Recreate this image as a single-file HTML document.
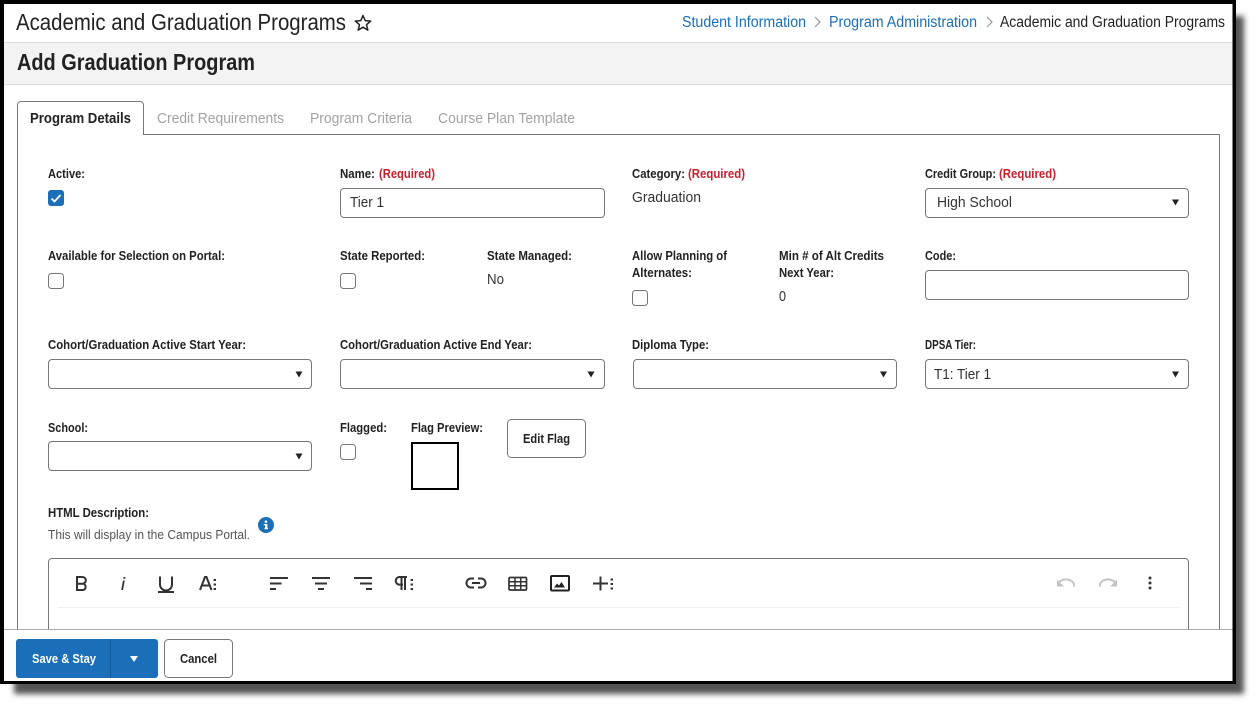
<!DOCTYPE html>
<html lang="en"><head><meta charset="utf-8"><title>Add Graduation Program</title>
<style>
html,body{margin:0;padding:0;background:#fff;width:1260px;height:709px;overflow:hidden}
svg{display:block}
text{font-family:"Liberation Sans",sans-serif;fill:#2b2b2b}
.l{font-size:13px;font-weight:bold;fill:#222}
.r{font-size:13px;font-weight:bold;fill:#c8202f}
.v{font-size:15px;fill:#333}
.f{fill:#fff;stroke:#777;stroke-width:1}
.i{fill:none;stroke:#333;stroke-width:2}
.d{fill:none;stroke:#333;stroke-width:2.400}
</style></head><body>
<svg width="1260" height="709" viewBox="0 0 1260 709" xmlns="http://www.w3.org/2000/svg">
<defs><filter id="b" x="-5%" y="-5%" width="110%" height="110%"><feGaussianBlur stdDeviation="3"/></filter></defs>
<rect x="14" y="16" width="1230" height="678" fill="#555" filter="url(#b)"/>
<rect x="0" y="0" width="1236" height="684" fill="#000"/>
<rect x="4" y="4" width="1228.500" height="677" fill="#fff"/>

<!-- header -->
<text x="16" y="30" font-size="23" textLength="330" lengthAdjust="spacingAndGlyphs" style="fill:#222">Academic and Graduation Programs</text>
<path d="M363 15.500l2.200 5.100 5.500.5-4.200 3.600 1.300 5.400-4.800-2.900-4.800 2.900 1.300-5.400-4.200-3.600 5.500-.5z" fill="none" stroke="#222" stroke-width="1.500" stroke-linejoin="round"/>
<text x="682" y="27" font-size="15.500" textLength="124" lengthAdjust="spacingAndGlyphs" style="fill:#1a6fb8">Student Information</text>
<path d="M815 17l5 5-5 5" fill="none" stroke="#999" stroke-width="1.200"/>
<text x="829" y="27" font-size="15.500" textLength="148" lengthAdjust="spacingAndGlyphs" style="fill:#1a6fb8">Program Administration</text>
<path d="M987 17l5 5-5 5" fill="none" stroke="#999" stroke-width="1.200"/>
<text x="1000" y="27" font-size="15.500" textLength="225" lengthAdjust="spacingAndGlyphs" style="fill:#222">Academic and Graduation Programs</text>
<rect x="4" y="42" width="1228.500" height="43" fill="#f3f3f3"/>
<rect x="4" y="42" width="1228.500" height="1" fill="#ddd"/>
<rect x="4" y="84" width="1228.500" height="1" fill="#ddd"/>
<text x="17" y="70" font-size="23" font-weight="bold" textLength="238" lengthAdjust="spacingAndGlyphs" style="fill:#222">Add Graduation Program</text>

<!-- panel and tabs -->
<path d="M17.500 629V134.500H1219.500V629" fill="none" stroke="#777"/>
<path d="M17.500 135V105a3.500 3.500 0 0 1 3.500-3.500H140a3.500 3.500 0 0 1 3.500 3.500V134.500" fill="#fff" stroke="#777"/>
<rect x="18" y="130" width="125" height="6" fill="#fff"/>
<text x="30" y="123" font-size="15" font-weight="bold" textLength="101" lengthAdjust="spacingAndGlyphs" style="fill:#222">Program Details</text>
<text x="157" y="123" font-size="15" textLength="127" lengthAdjust="spacingAndGlyphs" style="fill:#a3a3a3">Credit Requirements</text>
<text x="310" y="123" font-size="15" textLength="102" lengthAdjust="spacingAndGlyphs" style="fill:#a3a3a3">Program Criteria</text>
<text x="438" y="123" font-size="15" textLength="137" lengthAdjust="spacingAndGlyphs" style="fill:#a3a3a3">Course Plan Template</text>

<!-- row 1 -->
<text class="l" x="48" y="178" textLength="37" lengthAdjust="spacingAndGlyphs">Active:</text>
<rect x="48" y="190" width="16" height="16" rx="3" fill="#1a6fb8"/>
<path d="M51.500 198.500l3 3 6-6.500" fill="none" stroke="#fff" stroke-width="1.800"/>
<text class="l" x="340" y="178" textLength="35" lengthAdjust="spacingAndGlyphs">Name:</text>
<text class="r" x="379" y="178" textLength="56" lengthAdjust="spacingAndGlyphs">(Required)</text>
<rect class="f" x="340.500" y="188.500" width="264" height="29" rx="3.500"/>
<text class="v" x="350" y="207" textLength="34" lengthAdjust="spacingAndGlyphs">Tier 1</text>
<text class="l" x="632" y="178" textLength="53" lengthAdjust="spacingAndGlyphs">Category:</text>
<text class="r" x="688" y="178" textLength="57" lengthAdjust="spacingAndGlyphs">(Required)</text>
<text class="v" x="632" y="202" textLength="69" lengthAdjust="spacingAndGlyphs">Graduation</text>
<text class="l" x="925" y="178" textLength="71" lengthAdjust="spacingAndGlyphs">Credit Group:</text>
<text class="r" x="999" y="178" textLength="57" lengthAdjust="spacingAndGlyphs">(Required)</text>
<rect class="f" x="925.500" y="188.500" width="263" height="29" rx="3.500"/>
<text class="v" x="937" y="207" textLength="75" lengthAdjust="spacingAndGlyphs">High School</text>
<path d="M1172 199.500h7l-3.500 6z" fill="#222"/>

<!-- row 2 -->
<text class="l" x="48" y="260" textLength="177" lengthAdjust="spacingAndGlyphs">Available for Selection on Portal:</text>
<rect class="f" x="48.500" y="273.500" width="15" height="15" rx="3"/>
<text class="l" x="340" y="260" textLength="85" lengthAdjust="spacingAndGlyphs">State Reported:</text>
<rect class="f" x="340.500" y="273.500" width="15" height="15" rx="3"/>
<text class="l" x="487" y="260" textLength="85" lengthAdjust="spacingAndGlyphs">State Managed:</text>
<text class="v" x="487" y="284" textLength="17" lengthAdjust="spacingAndGlyphs">No</text>
<text class="l" x="632" y="260" textLength="95" lengthAdjust="spacingAndGlyphs">Allow Planning of</text>
<text class="l" x="632" y="277" textLength="60" lengthAdjust="spacingAndGlyphs">Alternates:</text>
<rect class="f" x="632.500" y="290.500" width="15" height="15" rx="3"/>
<text class="l" x="779" y="260" textLength="105" lengthAdjust="spacingAndGlyphs">Min # of Alt Credits</text>
<text class="l" x="779" y="277" textLength="55" lengthAdjust="spacingAndGlyphs">Next Year:</text>
<text class="v" x="779" y="301" textLength="7" lengthAdjust="spacingAndGlyphs">0</text>
<text class="l" x="925" y="260" textLength="31" lengthAdjust="spacingAndGlyphs">Code:</text>
<rect class="f" x="925.500" y="270.500" width="263" height="29" rx="3.500"/>

<!-- row 3 -->
<text class="l" x="48" y="349" textLength="198" lengthAdjust="spacingAndGlyphs">Cohort/Graduation Active Start Year:</text>
<rect class="f" x="48.500" y="359.500" width="263" height="29" rx="3.500"/>
<path d="M295.500 371.500h7l-3.500 6z" fill="#222"/>
<text class="l" x="340" y="349" textLength="192" lengthAdjust="spacingAndGlyphs">Cohort/Graduation Active End Year:</text>
<rect class="f" x="340.500" y="359.500" width="264" height="29" rx="3.500"/>
<path d="M587.500 371.500h7l-3.500 6z" fill="#222"/>
<text class="l" x="632" y="349" textLength="77" lengthAdjust="spacingAndGlyphs">Diploma Type:</text>
<rect class="f" x="633.500" y="359.500" width="263" height="29" rx="3.500"/>
<path d="M880 371.500h7l-3.500 6z" fill="#222"/>
<text class="l" x="925" y="349" textLength="51" lengthAdjust="spacingAndGlyphs">DPSA Tier:</text>
<rect class="f" x="925.500" y="359.500" width="263" height="29" rx="3.500"/>
<text class="v" x="934" y="379" textLength="57" lengthAdjust="spacingAndGlyphs">T1: Tier 1</text>
<path d="M1172 371.500h7l-3.500 6z" fill="#222"/>

<!-- row 4 -->
<text class="l" x="48" y="432" textLength="40" lengthAdjust="spacingAndGlyphs">School:</text>
<rect class="f" x="48.500" y="441.500" width="263" height="29" rx="3.500"/>
<path d="M295.500 453.500h7l-3.500 6z" fill="#222"/>
<text class="l" x="340" y="432" textLength="47" lengthAdjust="spacingAndGlyphs">Flagged:</text>
<rect class="f" x="340.500" y="444.500" width="15" height="15" rx="3"/>
<text class="l" x="411" y="432" textLength="72" lengthAdjust="spacingAndGlyphs">Flag Preview:</text>
<rect x="412" y="443" width="46" height="46" fill="#fff" stroke="#000" stroke-width="2"/>
<rect class="f" x="507.500" y="419.500" width="78" height="38" rx="4"/>
<text x="523" y="443" font-size="13" font-weight="bold" textLength="47" lengthAdjust="spacingAndGlyphs" style="fill:#222">Edit Flag</text>

<!-- description -->
<text class="l" x="48" y="517" textLength="101" lengthAdjust="spacingAndGlyphs">HTML Description:</text>
<text x="48" y="539" font-size="12.500" textLength="202" lengthAdjust="spacingAndGlyphs" style="fill:#555">This will display in the Campus Portal.</text>
<circle cx="266" cy="525" r="8" fill="#1a6fb8"/>
<rect x="265" y="524" width="2.400" height="5" fill="#fff"/><rect x="264.500" y="528" width="3.500" height="1.300" fill="#fff"/><rect x="263.800" y="524" width="2" height="1.200" fill="#fff"/>
<circle cx="266" cy="521.700" r="1.300" fill="#fff"/>

<!-- editor -->
<path d="M48.500 630V562a3.500 3.500 0 0 1 3.500-3.500H1185a3.500 3.500 0 0 1 3.500 3.500V630" fill="#fff" stroke="#777"/>
<rect x="58" y="607" width="1121" height="1" fill="#eee"/>
<path d="M77 577h5.500a3.300 3.300 0 0 1 0 6.700H77zM77 583.700h6.300a3.300 3.300 0 0 1 0 6.300H77z" class="i"/>
<path d="M123 580.500h1.800l-1.800 9.500h-1.800zM123.600 577h1.900l-.3 1.800h-1.900z" fill="#333"/>
<path d="M160 577v8a6 6 0 0 0 12 0v-8" class="i" transform="translate(0 -.5)"/>
<rect x="158" y="591" width="16" height="2" fill="#333"/>
<path d="M200 590l5-13h1.500l5 13M201.800 585.500h8" class="i"/>
<path d="M214.800 579v2M214.800 583.500v2M214.800 588v2" class="d"/>
<path d="M270 578h18M270 583.500h11.500M270 589h6" class="i"/>
<path d="M312 578h18M315 583.500h12M318 589h6" class="i"/>
<path d="M354 578h18M360 583.500h12M366 589h6" class="i"/>
<path d="M403 577h-3.500a3.800 3.800 0 0 0 0 7.600h3.500M401.500 577v13M405 577v13M399 577h8" class="i"/>
<path d="M411.800 579v2M411.800 583.500v2M411.800 588v2" class="d"/>
<path d="M474 578.500h-3a4.500 4.500 0 0 0 0 9h3M478 578.500h3a4.500 4.500 0 0 1 0 9h-3M472 583h8" class="i"/>
<rect x="509" y="577.500" width="17.500" height="12.500" rx="1" fill="none" stroke="#333" stroke-width="1.700"/>
<path d="M509 581.700h17.500M509 585.800h17.500M515 577.500v12.500M520.700 577.500v12.500" fill="none" stroke="#333" stroke-width="1.500"/>
<rect x="551" y="576" width="18" height="14.500" rx="1" fill="none" stroke="#222" stroke-width="2"/>
<path d="M554 587.500l3-4 2 2 2.500-3.500 3.500 5.500z" fill="#222"/>
<path d="M593 583.500h15M600.500 576.500v14" class="i"/>
<path d="M611.800 578.500v2M611.800 583v2M611.800 587.500v2" class="d"/>
<path d="M1058 584.500a8 6 0 0 1 16 2" fill="none" stroke="#c4c4c4" stroke-width="2"/><path d="M1057 579.500v7h7z" fill="#c4c4c4"/>
<path d="M1116 584.500a8 6 0 0 0-16 2" fill="none" stroke="#c4c4c4" stroke-width="2"/><path d="M1117 579.500v7h-7z" fill="#c4c4c4"/>
<circle cx="1150" cy="578" r="1.500" fill="#333"/><circle cx="1150" cy="583" r="1.500" fill="#333"/><circle cx="1150" cy="588" r="1.500" fill="#333"/>

<!-- footer -->
<rect x="4" y="629" width="1228.500" height="52" fill="#fff"/>
<rect x="4" y="629" width="1228.500" height="1" fill="#aaa"/>
<rect x="16" y="639" width="142" height="39" rx="3" fill="#1a6fb8"/>
<rect x="110" y="639" width="1" height="39" fill="#145c9c"/>
<text x="32" y="663" font-size="13" font-weight="bold" textLength="64" lengthAdjust="spacingAndGlyphs" style="fill:#fff">Save &amp; Stay</text>
<path d="M130 656h8l-4 6z" fill="#fff"/>
<rect class="f" x="164.500" y="639.500" width="68" height="38" rx="4"/>
<text x="180" y="663" font-size="13" font-weight="bold" textLength="37" lengthAdjust="spacingAndGlyphs" style="fill:#222">Cancel</text>
</svg>
</body></html>
